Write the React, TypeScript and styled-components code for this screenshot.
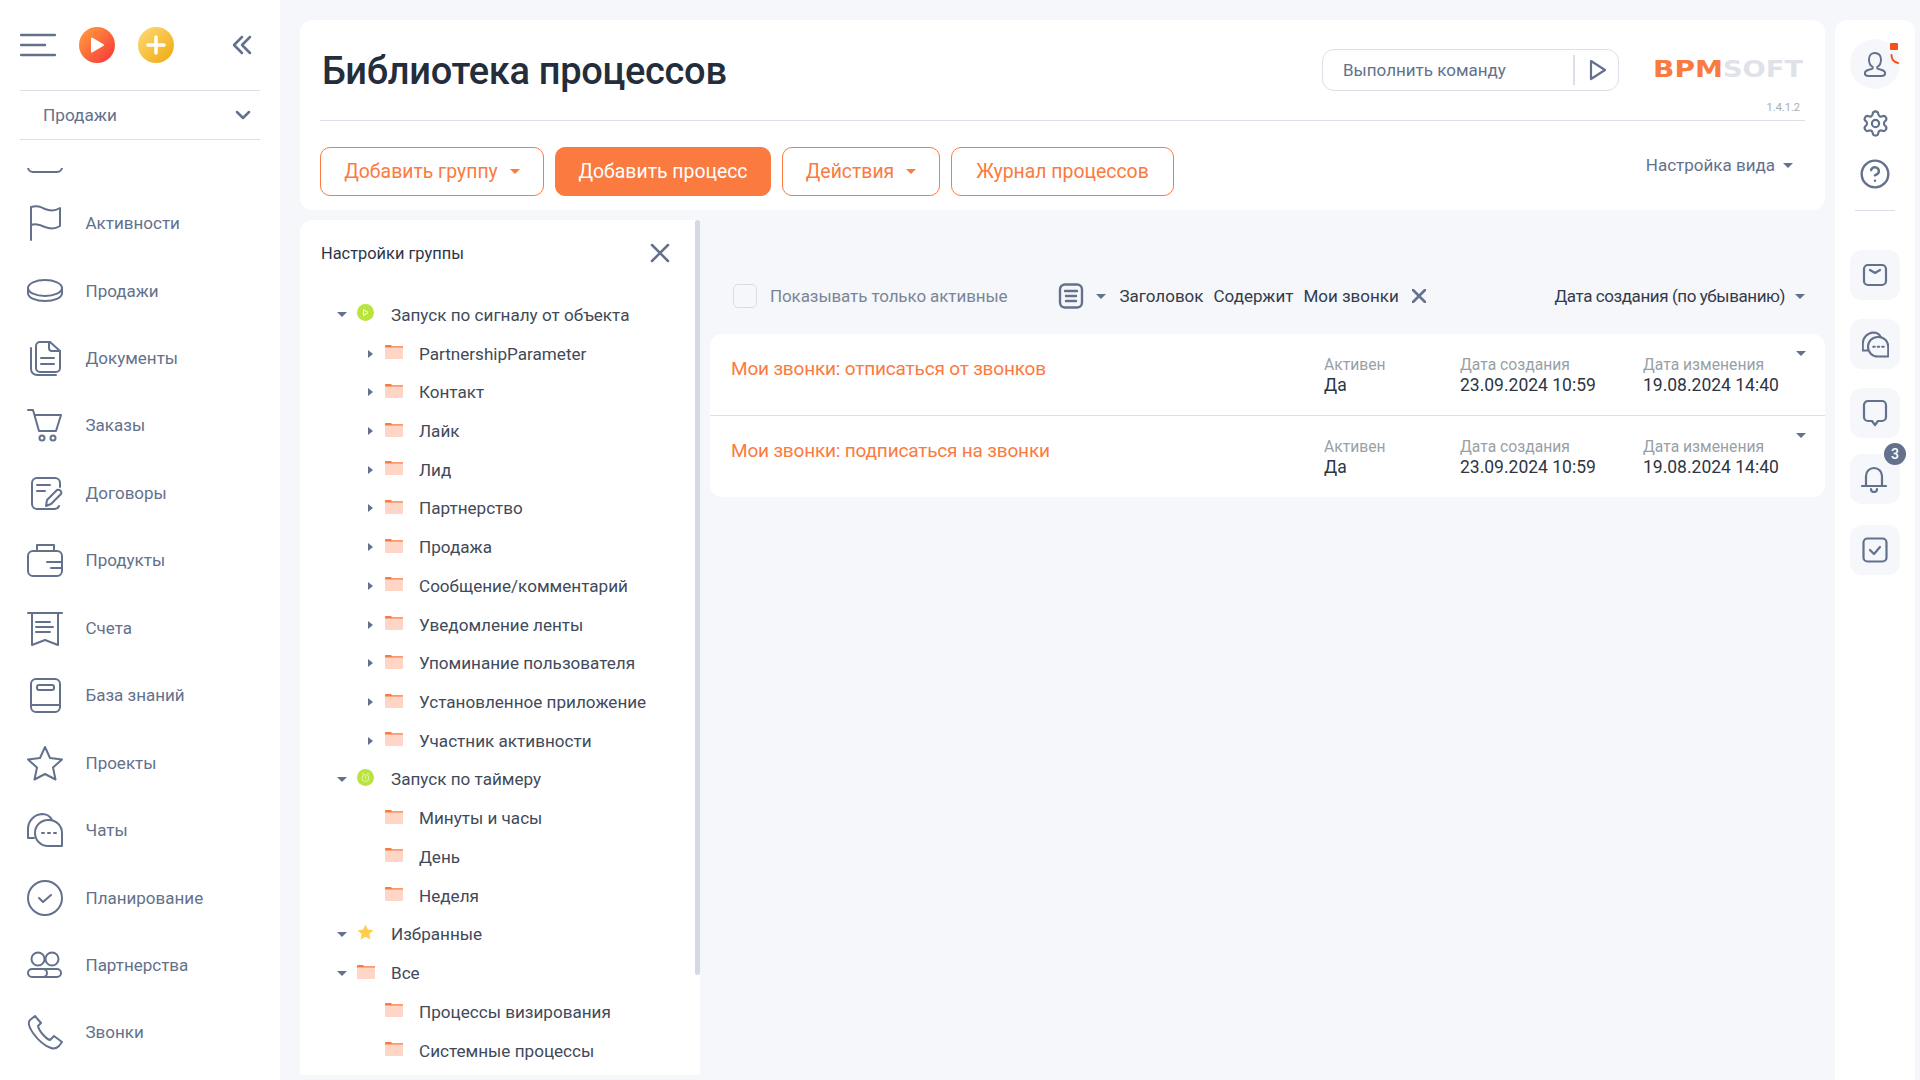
import type { ReactNode } from 'react';
import styled, { createGlobalStyle } from 'styled-components';
import { CircleHelp, Settings } from 'lucide-react';

const GREY = '#64718c';
const ORANGE = '#fb7a40';
const BG = '#f5f7fb';
const LINE = '#dcdfe8';

const GlobalStyle = createGlobalStyle`
  html, body { margin: 0; padding: 0; background: ${BG}; }
  body { font-family: Roboto, "Noto Sans", sans-serif; }
  * { box-sizing: border-box; }
`;

const navItems: { label?: string; icon: ReactNode }[] = [
  { icon: <rect x="1" y="0" width="34" height="34" rx="5" /> },
  { label: 'Активности', icon: <path d="M4 35V2C10 0 14 2 18 4C23 6 28 6 33 3V21C28 24 23 24 18 22C14 20 9 18 4 20" /> },
  { label: 'Продажи', icon: <><ellipse cx="18" cy="15" rx="17" ry="8" /><path d="M1 15v5c0 5 8 8 17 8s17-3 17-8v-5" /></> },
  { label: 'Документы', icon: <><path d="M9 6a4 4 0 0 1 4-4h10l10 9v17a4 4 0 0 1-4 4H13a4 4 0 0 1-4-4z" /><path d="M22 2v6a3 3 0 0 0 3 3h8M14 18h13M14 24h13M4 8v21a6 6 0 0 0 6 6h19" /></> },
  { label: 'Заказы', icon: <><path d="M1 3h5l6 21h17l5-16H8" /><circle cx="15" cy="31" r="2.5" /><circle cx="26" cy="31" r="2.5" /></> },
  { label: 'Договоры', icon: <><path d="M33 12V8a5 5 0 0 0-5-5H10a5 5 0 0 0-5 5v21a5 5 0 0 0 5 5h18a5 5 0 0 0 4-3" /><path d="M10 10h13M10 16h8M19 31l1-6 10-10a3 3 0 0 1 4 4L24 29z" /></> },
  { label: 'Продукты', icon: <><rect x="1" y="9" width="34" height="25" rx="5" /><path d="M10 9V3h17v6M20 20h15M24 26h11" /></> },
  { label: 'Счета', icon: <path d="M1 3h34M5 3v32l13-5 13 5V3M9 12h14M9 17h17M9 22h14" /> },
  { label: 'База знаний', icon: <><rect x="4" y="2" width="29" height="33" rx="5" /><path d="M4 28h29" /><rect x="10" y="8" width="17" height="5" rx="2" /></> },
  { label: 'Проекты', icon: <path d="M18 2l5 11 12 1.5-9 8 2.5 12L18 29 7.500 34.500 10 22.500 1 14.500 13 13z" /> },
  { label: 'Чаты', icon: <><path d="M22 8a13 13 0 0 1 13 13v13H21a13 13 0 0 1 0-26z" /><path d="M15 21h2M21 21h2M27 21h2M7 26H1v-9A15 15 0 0 1 15 2c4 0 8 2 10 6" /></> },
  { label: 'Планирование', icon: <><circle cx="18" cy="18" r="17" /><path d="M12 18l4 4 8-7" /></> },
  { label: 'Партнерства', icon: <><circle cx="11" cy="12" r="6.500" /><circle cx="25" cy="12" r="6.500" /><rect x="1" y="22" width="19" height="8" rx="4" /><path d="M17 22h13a4 4 0 0 1 0 8H17" /></> },
  { label: 'Звонки', icon: <path d="M8 2L3 6C1 8 2 13 6 19C11 26 18 32 24 34C27 35 30 34 32 32L35 28L27 22L23 26C19 25 12 17 11 12L14 9Z" /> },
];

const Folder = () => (
  <FolderSvg viewBox="0 0 18 15">
    <path d="M0 2a1 1 0 0 1 1-1h5l1 2h11v11a1 1 0 0 1-1 1H1a1 1 0 0 1-1-1z" fill="#ffd5c6" />
    <path d="M0 2a1 1 0 0 1 1-1h5l1 1.200h11v1.300H0z" fill={ORANGE} />
  </FolderSvg>
);

const GreenPlay = () => (
  <StatusSvg viewBox="0 0 17 17">
    <circle cx="8.500" cy="8.500" r="8.500" fill="#b9e33d" />
    <path d="M6.500 5.500l4.500 3-4.500 3z" fill="none" stroke="#fff" strokeWidth="1" />
  </StatusSvg>
);

const GreenTimer = () => (
  <StatusSvg viewBox="0 0 17 17">
    <circle cx="8.500" cy="8.500" r="8.500" fill="#b9e33d" />
    <circle cx="8.500" cy="9" r="3.500" fill="none" stroke="#e6f5a8" strokeWidth="1" />
    <path d="M8.500 7v2l1.500 1M5 5l1.500-1M12 5l-1.500-1" fill="none" stroke="#e6f5a8" strokeWidth="1" />
  </StatusSvg>
);

const GoldStar = () => (
  <StatusSvg viewBox="0 0 17 17">
    <path d="M8.500 0.500l2.400 5 5.500.7-4 3.800 1 5.500-4.900-2.700-4.900 2.700 1-5.500-4-3.800 5.500-.7z" fill="#fdcf4e" />
  </StatusSvg>
);

type TreeEntry = { label: string; level: 0 | 1; caret?: 'down' | 'right'; icon: ReactNode };
const tree: TreeEntry[] = [
  { label: 'Запуск по сигналу от объекта', level: 0, caret: 'down', icon: <GreenPlay /> },
  ...['PartnershipParameter', 'Контакт', 'Лайк', 'Лид', 'Партнерство', 'Продажа', 'Сообщение/комментарий', 'Уведомление ленты', 'Упоминание пользователя', 'Установленное приложение', 'Участник активности']
    .map((label): TreeEntry => ({ label, level: 1, caret: 'right', icon: <Folder /> })),
  { label: 'Запуск по таймеру', level: 0, caret: 'down', icon: <GreenTimer /> },
  ...['Минуты и часы', 'День', 'Неделя'].map((label): TreeEntry => ({ label, level: 1, icon: <Folder /> })),
  { label: 'Избранные', level: 0, caret: 'down', icon: <GoldStar /> },
  { label: 'Все', level: 0, caret: 'down', icon: <Folder /> },
  ...['Процессы визирования', 'Системные процессы'].map((label): TreeEntry => ({ label, level: 1, icon: <Folder /> })),
];

const processes = ['Мои звонки: отписаться от звонков', 'Мои звонки: подписаться на звонки'];

const App = () => (
  <>
    <GlobalStyle />
    <Page>
      <Sidebar>
        <SideTop>
          <IconSvg width="36" height="24" viewBox="0 0 36 24">
            <path d="M1 2h34M1 12h24M1 22h34" strokeWidth="2.500" />
          </IconSvg>
          <RoundButton $from="#ffa33c" $to="#f9323a">
            <svg width="18" height="18" viewBox="0 0 18 18"><path d="M4 2.500l11 6.500-11 6.500z" fill="#fff" stroke="#fff" strokeWidth="2" strokeLinejoin="round" /></svg>
          </RoundButton>
          <RoundButton $from="#fedb78" $to="#efa80c">
            <svg width="20" height="20" viewBox="0 0 20 20"><path d="M10 2v16M2 10h16" stroke="#fff" strokeWidth="3.500" strokeLinecap="round" /></svg>
          </RoundButton>
          <CollapseIcon width="20" height="20" viewBox="0 0 20 20">
            <path d="M10 2L2 10l8 8M18 2l-8 8 8 8" strokeWidth="2.500" />
          </CollapseIcon>
        </SideTop>
        <SideSelect>
          <span>Продажи</span>
          <IconSvg width="16" height="10" viewBox="0 0 16 10"><path d="M2 2l6 6 6-6" strokeWidth="2.500" /></IconSvg>
        </SideSelect>
        <NavClip>
          <NavList>
            {navItems.map((item, i) => (
              <NavItem key={i}>
                <IconSvg width="36" height="36" viewBox="0 0 36 36" strokeWidth="2">{item.icon}</IconSvg>
                {item.label && <NavLabel>{item.label}</NavLabel>}
              </NavItem>
            ))}
          </NavList>
        </NavClip>
      </Sidebar>

      <Main>
        <HeaderCard>
          <TitleRow>
            <Title>Библиотека процессов</Title>
            <CommandBox>
              <CommandText>Выполнить команду</CommandText>
              <CommandRun>
                <IconSvg width="20" height="24" viewBox="0 0 20 24"><path d="M3 3l14 9-14 9z" strokeWidth="2.200" /></IconSvg>
              </CommandRun>
            </CommandBox>
            <LogoBlock>
              <svg width="150" height="24" viewBox="0 0 150 24">
                <LogoText x="0" y="20" textLength="70" lengthAdjust="spacingAndGlyphs" fill={ORANGE}>BPM</LogoText>
                <LogoText x="70" y="20" textLength="80" lengthAdjust="spacingAndGlyphs" fill="#dfe2e9">SOFT</LogoText>
              </svg>
              <Version>1.4.1.2</Version>
            </LogoBlock>
          </TitleRow>
          <Toolbar>
            <ActionButton $width={224}>Добавить группу<ButtonCaret /></ActionButton>
            <ActionButton $width={216} $filled>Добавить процесс</ActionButton>
            <ActionButton $width={158}>Действия<ButtonCaret /></ActionButton>
            <ActionButton $width={223}>Журнал процессов</ActionButton>
            <ViewSettings>Настройка вида<GreyCaret /></ViewSettings>
          </Toolbar>
        </HeaderCard>

        <Lower>
          <TreePanel>
            <TreeHead>
              <TreeTitle>Настройки группы</TreeTitle>
              <IconSvg width="20" height="20" viewBox="0 0 20 20"><path d="M2 2l16 16M18 2L2 18" strokeWidth="2.500" /></IconSvg>
            </TreeHead>
            <TreeList>
              {tree.map((row) => (
                <TreeRow key={row.label} $level={row.level}>
                  <CaretSlot $level={row.level}>
                    {row.caret === 'down' && <GreyCaret />}
                    {row.caret === 'right' && <RightCaret />}
                  </CaretSlot>
                  <TreeIconSlot>{row.icon}</TreeIconSlot>
                  <TreeLabel>{row.label}</TreeLabel>
                </TreeRow>
              ))}
            </TreeList>
            <PanelScroll />
          </TreePanel>

          <Content>
            <FilterBar>
              <CheckBox />
              <CheckLabel>Показывать только активные</CheckLabel>
              <FilterIcon width="26" height="26" viewBox="0 0 26 26">
                <rect x="2" y="1.500" width="22" height="23" rx="5" strokeWidth="2.400" />
                <path d="M7 8h12M8 13h10M8 18h10" strokeWidth="2.400" />
              </FilterIcon>
              <GreyCaret />
              <FilterText $left={13}>Заголовок</FilterText>
              <FilterText $left={10}>Содержит</FilterText>
              <FilterText $left={10}>Мои звонки</FilterText>
              <FilterClear width="14" height="14" viewBox="0 0 14 14"><path d="M1 1l12 12M13 1L1 13" strokeWidth="2.600" /></FilterClear>
              <SortBox>Дата создания (по убыванию)<GreyCaret /></SortBox>
            </FilterBar>
            <ListCard>
              {processes.map((name) => (
                <ProcessRow key={name}>
                  <ProcessName>{name}</ProcessName>
                  <Meta><MetaLabel>Активен</MetaLabel><MetaValue>Да</MetaValue></Meta>
                  <Meta><MetaLabel>Дата создания</MetaLabel><MetaValue>23.09.2024 10:59</MetaValue></Meta>
                  <Meta><MetaLabel>Дата изменения</MetaLabel><MetaValue>19.08.2024 14:40</MetaValue></Meta>
                  <RowMenu><GreyCaret /></RowMenu>
                </ProcessRow>
              ))}
            </ListCard>
          </Content>
        </Lower>
      </Main>

      <Rail>
        <Avatar>
          <IconSvg width="24" height="26" viewBox="0 0 26 28">
            <path d="M13 2c-4 0-6.500 3-6.500 7s2 7 4 8v2l-5 1.500C3 21.500 2 23 2 24c0 2 1.500 3 4 3h14c2.500 0 4-1 4-3 0-1-1-2.500-3.500-3.500l-5-1.500v-2c2-1 4-4 4-8s-2.500-7-6.500-7z" strokeWidth="2.100" />
          </IconSvg>
          <AvatarMail />
          <AvatarPhone width="9" height="10" viewBox="0 0 9 10"><path d="M1.500 1c0 4 2.500 7 6.500 8" strokeWidth="2" /></AvatarPhone>
        </Avatar>
        <RailPlain $top={19}><Settings size={29} strokeWidth={1.800} color={GREY} /></RailPlain>
        <RailPlain $top={19}><CircleHelp size={32} strokeWidth={1.800} color={GREY} /></RailPlain>
        <RailDivider />
        <RailTile>
          <IconSvg width="26" height="26" viewBox="0 0 26 26">
            <rect x="2" y="3" width="22" height="20" rx="4" strokeWidth="2.200" />
            <path d="M8 8l5 3 5-3" strokeWidth="2.200" />
          </IconSvg>
        </RailTile>
        <RailTile $top={19}>
          <IconSvg width="27" height="27" viewBox="0 0 36 36" strokeWidth="2.800">
            <path d="M22 8a13 13 0 0 1 13 13v13H21a13 13 0 0 1 0-26z" />
            <path d="M15 21h2M21 21h2M27 21h2M7 26H1v-9A15 15 0 0 1 15 2c4 0 8 2 10 6" />
          </IconSvg>
        </RailTile>
        <RailTile $top={19}>
          <IconSvg width="26" height="28" viewBox="0 0 26 28">
            <path d="M6 2h14a4 4 0 0 1 4 4v12a4 4 0 0 1-4 4h-4l-3 4-3-4H6a4 4 0 0 1-4-4V6a4 4 0 0 1 4-4z" strokeWidth="2.200" />
          </IconSvg>
        </RailTile>
        <RailTile $top={16}>
          <BellIcon width="26" height="28" viewBox="0 0 26 28">
            <path d="M5 20V11a8 8 0 0 1 16 0v9M1 21h24M10 24a3 3 0 0 0 6 0" strokeWidth="2.200" />
          </BellIcon>
          <CountBadge>3</CountBadge>
        </RailTile>
        <RailTile $top={21}>
          <IconSvg width="26" height="26" viewBox="0 0 26 26">
            <rect x="1.500" y="1.500" width="23" height="23" rx="4" strokeWidth="2.200" />
            <path d="M8 13l4 4 6-7" strokeWidth="2.200" />
          </IconSvg>
        </RailTile>
      </Rail>
    </Page>
  </>
);

const Page = styled.div`
  display: flex;
  width: 1920px;
  height: 1080px;
  overflow: hidden;
  background: ${BG};
`;
const IconSvg = styled.svg`
  flex: none;
  fill: none;
  stroke: ${GREY};
  stroke-linecap: round;
  stroke-linejoin: round;
`;
const Sidebar = styled.aside`
  width: 280px;
  flex: none;
  background: #fff;
  padding: 0 20px;
  display: flex;
  flex-direction: column;
`;
const SideTop = styled.div`
  height: 91px;
  display: flex;
  align-items: center;
  border-bottom: 1px solid ${LINE};
`;
const RoundButton = styled.div<{ $from: string; $to: string }>`
  width: 36px;
  height: 36px;
  border-radius: 50%;
  margin-left: 23px;
  display: flex;
  align-items: center;
  justify-content: center;
  background: linear-gradient(135deg, ${(p) => p.$from}, ${(p) => p.$to});
`;
const CollapseIcon = styled(IconSvg)`
  margin-left: 58px;
`;
const SideSelect = styled.div`
  height: 49px;
  display: flex;
  align-items: center;
  justify-content: space-between;
  padding: 0 9px 0 23px;
  border-bottom: 1px solid ${LINE};
  font-size: 17.2px;
  color: ${GREY};
`;
const NavClip = styled.div`
  margin-top: 28px;
  flex: 1;
  overflow: hidden;
`;
const NavList = styled.div`
  margin-top: -46px;
`;
const NavItem = styled.div`
  height: 67.45px;
  display: flex;
  align-items: center;
  padding-left: 7px;
`;
const NavLabel = styled.span`
  margin-left: 22.500px;
  font-size: 17px;
  color: ${GREY};
`;
const Main = styled.main`
  width: 1525px;
  flex: none;
  margin-left: 20px;
  padding-top: 20px;
  display: flex;
  flex-direction: column;
`;
const HeaderCard = styled.header`
  height: 190px;
  background: #fff;
  border-radius: 12px;
  padding: 0 20px;
`;
const TitleRow = styled.div`
  height: 101px;
  display: flex;
  align-items: center;
  border-bottom: 1px solid ${LINE};
`;
const Title = styled.h1`
  margin: 2px 0 0 2px;
  flex: 1;
  font-size: 38px;
  font-weight: 500;
  letter-spacing: -0.3px;
  color: #242d3c;
`;
const CommandBox = styled.div`
  width: 297px;
  height: 42px;
  display: flex;
  align-items: center;
  justify-content: space-between;
  border: 1px solid ${LINE};
  border-radius: 12px;
  padding: 0 10px 0 20px;
`;
const CommandText = styled.span`
  font-size: 17px;
  color: ${GREY};
`;
const CommandRun = styled.div`
  height: 30px;
  display: flex;
  align-items: center;
  padding-left: 13px;
  border-left: 2px solid ${LINE};
`;
const LogoBlock = styled.div`
  width: 152px;
  margin-left: 34px;
  align-self: flex-start;
  padding-top: 37px;
  display: flex;
  flex-direction: column;
`;
const LogoText = styled.text`
  font-family: "DejaVu Sans", sans-serif;
  font-weight: 700;
  font-size: 23px;
`;
const Version = styled.span`
  align-self: flex-end;
  margin: 20px 5px 0 0;
  font-size: 11px;
  color: #a9adb5;
`;
const Toolbar = styled.div`
  display: flex;
  align-items: flex-start;
  gap: 11px;
  padding-top: 26px;
`;
const ActionButton = styled.button<{ $filled?: boolean; $width: number }>`
  width: ${(p) => p.$width}px;
  height: 49px;
  padding: 0;
  display: flex;
  align-items: center;
  justify-content: center;
  gap: 12px;
  border: 1px solid ${ORANGE};
  border-radius: 10px;
  background: ${(p) => (p.$filled ? ORANGE : '#fff')};
  color: ${(p) => (p.$filled ? '#fff' : ORANGE)};
  font-family: Roboto, sans-serif;
  font-size: 19.400px;
`;
const ButtonCaret = styled.i`
  width: 0;
  height: 0;
  border-left: 5px solid transparent;
  border-right: 5px solid transparent;
  border-top: 5px solid ${ORANGE};
`;
const GreyCaret = styled.i`
  display: inline-block;
  flex: none;
  width: 0;
  height: 0;
  border-left: 5px solid transparent;
  border-right: 5px solid transparent;
  border-top: 5px solid ${GREY};
`;
const RightCaret = styled.i`
  display: inline-block;
  width: 0;
  height: 0;
  border-top: 4px solid transparent;
  border-bottom: 4px solid transparent;
  border-left: 5px solid ${GREY};
`;
const ViewSettings = styled.div`
  margin-left: auto;
  margin-right: 12px;
  margin-top: 8px;
  display: flex;
  align-items: center;
  gap: 8px;
  font-size: 17px;
  color: ${GREY};
`;
const Lower = styled.div`
  margin-top: 10px;
  flex: 1;
  display: flex;
  gap: 10px;
`;
const TreePanel = styled.section`
  position: relative;
  width: 400px;
  height: 855px;
  overflow: hidden;
  background: #fff;
  border-top-left-radius: 12px;
`;
const PanelScroll = styled.div`
  position: absolute;
  top: 0;
  right: 0;
  width: 5px;
  height: 755px;
  border-radius: 3px;
  background: #d5d9e4;
`;
const TreeHead = styled.div`
  height: 66px;
  display: flex;
  align-items: center;
  justify-content: space-between;
  padding: 0 30px 0 21px;
`;
const TreeTitle = styled.span`
  font-size: 16.400px;
  color: #2d3648;
`;
const TreeList = styled.div`
  margin-top: 9.500px;
`;
const TreeRow = styled.div<{ $level: 0 | 1 }>`
  height: 38.73px;
  display: flex;
  align-items: center;
  padding-left: ${(p) => (p.$level ? 68 : 37)}px;
`;
const CaretSlot = styled.div<{ $level: 0 | 1 }>`
  width: ${(p) => (p.$level ? 17 : 20)}px;
  flex: none;
  display: flex;
  align-items: center;
`;
const TreeIconSlot = styled.div`
  width: 34px;
  flex: none;
  display: flex;
  align-items: center;
  margin-bottom: 4px;
`;
const FolderSvg = styled.svg`
  width: 18px;
  height: 15px;
`;
const StatusSvg = styled.svg`
  width: 17px;
  height: 17px;
`;
const TreeLabel = styled.span`
  font-size: 17.100px;
  color: #414a5a;
`;
const Content = styled.section`
  width: 1115px;
  flex: none;
`;
const FilterBar = styled.div`
  height: 114px;
  padding: 38px 20px 0 23px;
  display: flex;
  align-items: center;
`;
const CheckBox = styled.div`
  width: 24px;
  height: 24px;
  border: 1px solid #d8dbe3;
  border-radius: 5px;
`;
const CheckLabel = styled.span`
  margin-left: 13px;
  font-size: 17px;
  letter-spacing: -0.1px;
  color: #7b8596;
`;
const FilterIcon = styled(IconSvg)`
  margin: 0 12px 0 51px;
`;
const FilterText = styled.span<{ $left: number }>`
  margin-left: ${(p) => p.$left}px;
  font-size: 17px;
  color: #323b4c;
`;
const FilterClear = styled(IconSvg)`
  margin-left: 13px;
`;
const SortBox = styled.div`
  margin-left: auto;
  display: flex;
  align-items: center;
  gap: 10px;
  font-size: 17px;
  letter-spacing: -0.42px;
  color: #323b4c;
`;
const ListCard = styled.div`
  background: #fff;
  border-radius: 12px;
`;
const ProcessRow = styled.div`
  position: relative;
  min-height: 81px;
  display: grid;
  grid-template-columns: 593px 136px 183px 1fr;
  align-items: start;
  padding: 21px 0 0 21px;
  &:not(:last-child) {
    min-height: 82px;
    border-bottom: 1px solid ${LINE};
  }
`;
const ProcessName = styled.div`
  margin-top: 2px;
  font-size: 19px;
  letter-spacing: -0.18px;
  line-height: 24px;
  color: ${ORANGE};
`;
const Meta = styled.div`
  display: flex;
  flex-direction: column;
`;
const MetaLabel = styled.span`
  font-size: 15.700px;
  line-height: 20px;
  color: #9a9fa6;
`;
const MetaValue = styled.span`
  font-size: 17.500px;
  line-height: 20px;
  color: #2e3542;
`;
const RowMenu = styled.div`
  position: absolute;
  top: 7px;
  right: 19px;
`;
const Rail = styled.aside`
  width: 80px;
  flex: none;
  margin: 20px 0 0 10px;
  padding-top: 19px;
  background: #fff;
  border-radius: 12px 12px 0 0;
  display: flex;
  flex-direction: column;
  align-items: center;
`;
const Avatar = styled.div`
  position: relative;
  width: 50px;
  height: 50px;
  border-radius: 50%;
  background: ${BG};
  display: flex;
  align-items: center;
  justify-content: center;
`;
const AvatarMail = styled.i`
  position: absolute;
  top: 4px;
  right: 2px;
  width: 8px;
  height: 7px;
  border-radius: 1px;
  background: #f4511e;
`;
const AvatarPhone = styled(IconSvg)`
  position: absolute;
  top: 15px;
  right: 1px;
  stroke: #f4511e;
`;
const RailPlain = styled.div<{ $top: number }>`
  margin-top: ${(p) => p.$top}px;
  height: 31px;
  display: flex;
  align-items: center;
`;
const RailDivider = styled.div`
  width: 40px;
  height: 1px;
  margin: 21px 0 39px;
  background: ${LINE};
`;
const RailTile = styled.div<{ $top?: number }>`
  position: relative;
  width: 50px;
  height: 50px;
  margin-top: ${(p) => p.$top ?? 0}px;
  border-radius: 12px;
  background: ${BG};
  display: flex;
  align-items: center;
  justify-content: center;
`;
const BellIcon = styled(IconSvg)`
  margin: 0 2px 0 0;
`;
const CountBadge = styled.span`
  position: absolute;
  top: -11px;
  right: -6px;
  width: 22px;
  height: 22px;
  border-radius: 50%;
  background: ${GREY};
  color: #fff;
  font-size: 14px;
  font-weight: 500;
  display: flex;
  align-items: center;
  justify-content: center;
`;

export default App;
